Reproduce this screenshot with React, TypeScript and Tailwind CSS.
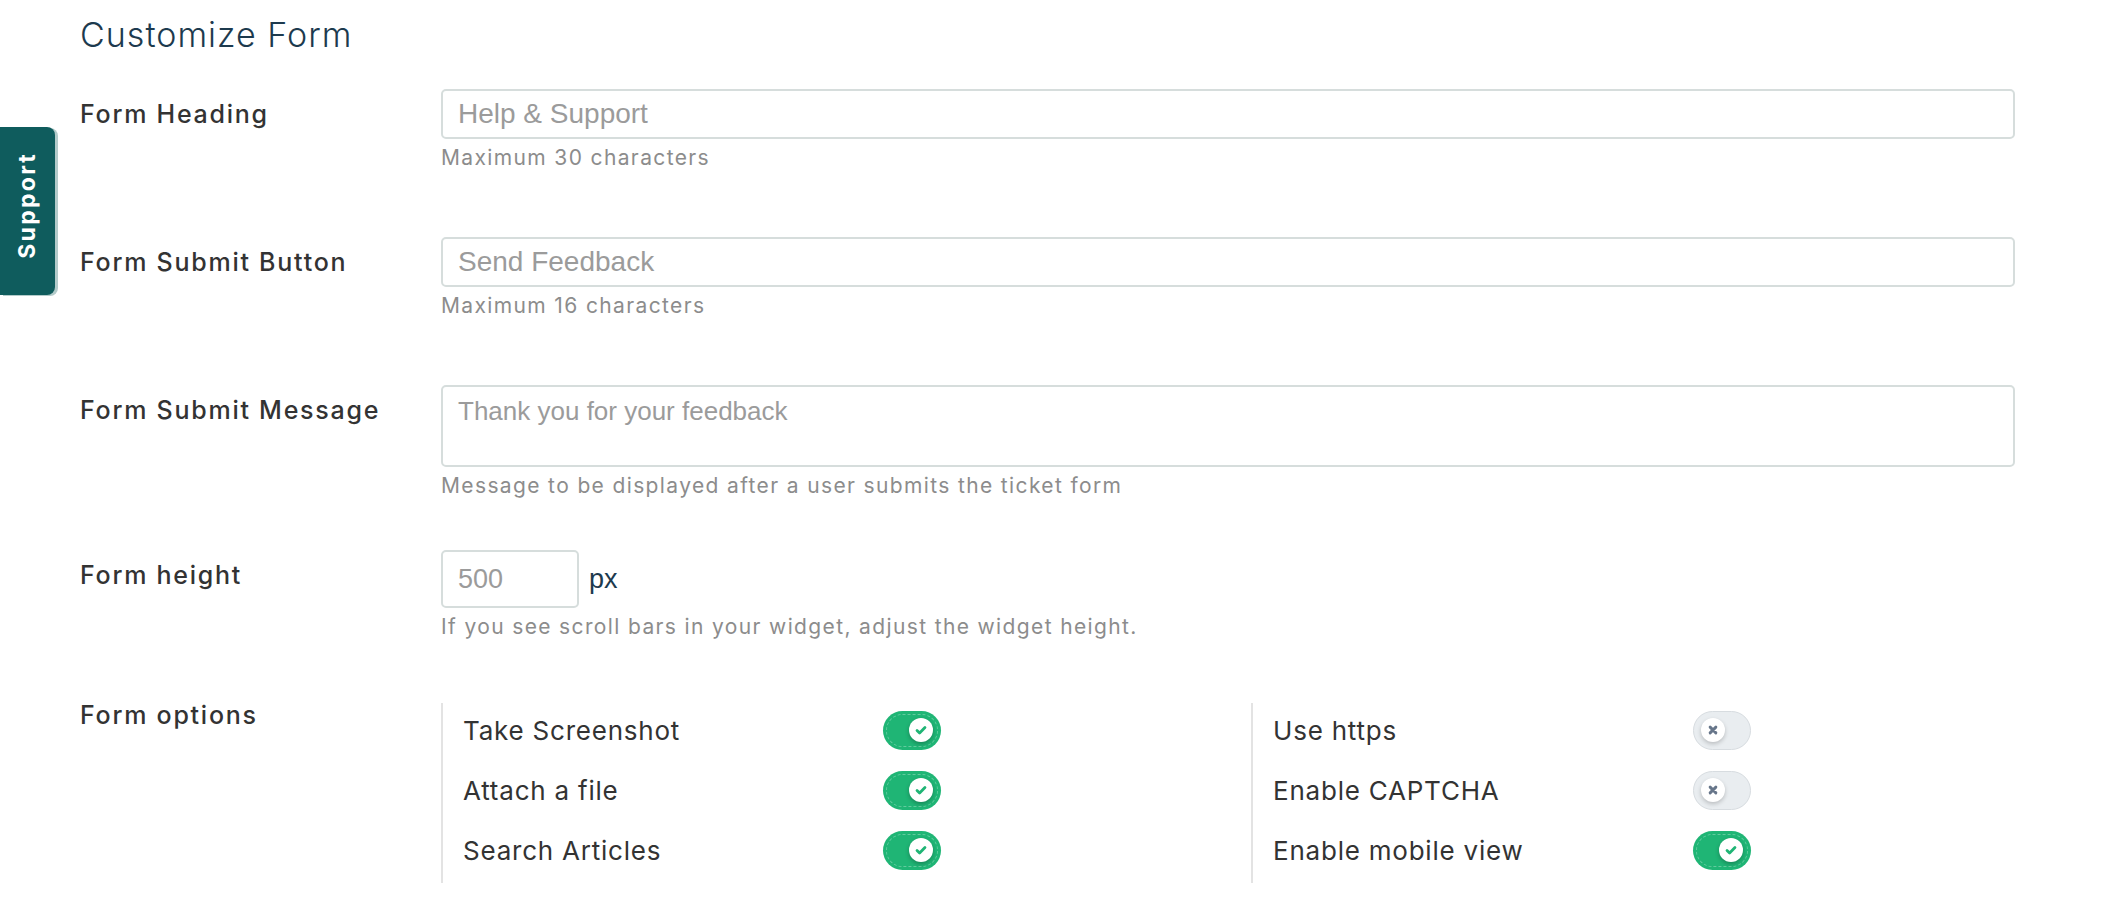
import type { ReactNode } from "react"

const leftOptions = [
  { label: "Take Screenshot", on: true },
  { label: "Attach a file", on: true },
  { label: "Search Articles", on: true },
]

const rightOptions = [
  { label: "Use https", on: false },
  { label: "Enable CAPTCHA", on: false },
  { label: "Enable mobile view", on: true },
]

const inputCls =
  "w-full rounded-[5px] border-2 border-[#d6dddc] bg-white px-[15px] font-['Liberation_Sans',Arial,sans-serif] text-[#333] outline-none placeholder:text-[#9b9b9b]"

function Toggle({ on }: { on: boolean }) {
  if (on) {
    return (
      <span className="relative flex h-[39px] w-[58px] items-center justify-end rounded-full bg-[#1fb575] pr-[8px]">
        <span className="pointer-events-none absolute inset-[3px] rounded-full border border-dashed border-white/30" />
        <span className="relative flex h-[24px] w-[24px] items-center justify-center rounded-full bg-white shadow-[0_2px_4px_rgba(0,0,0,0.25)]">
          <svg width="14" height="14" viewBox="0 0 12 12">
            <path d="M2.6 6.4l2.2 2.2 4.6-4.8" fill="none" stroke="#1fb575" strokeWidth="2.4" strokeLinecap="round" strokeLinejoin="round" />
          </svg>
        </span>
      </span>
    )
  }
  return (
    <span className="relative flex h-[39px] w-[58px] items-center justify-start rounded-full border border-[#d7dce0] bg-[#e9edf0] pl-[7px]">
      <span className="relative flex h-[24px] w-[24px] items-center justify-center rounded-full bg-white shadow-[0_2px_4px_rgba(0,0,0,0.2)]">
        <svg width="12" height="12" viewBox="0 0 10 10">
          <path d="M2.6 2.6l4.8 4.8M7.4 2.6l-4.8 4.8" fill="none" stroke="#67768a" strokeWidth="2.4" strokeLinecap="round" />
        </svg>
      </span>
    </span>
  )
}

const labelCls = "w-[361px] shrink-0 text-[25px] font-medium leading-[32px] tracking-[0.07em] text-[#333]"

function Row({ label, children, className }: { label: string; children: ReactNode; className?: string }) {
  return (
    <div className={`flex ${className ?? ""}`}>
      <div className={`${labelCls} pt-[9px]`}>{label}</div>
      <div className="min-w-0 flex-1">{children}</div>
    </div>
  )
}

function Help({ children }: { children: ReactNode }) {
  return <p className="mt-[7px] text-[21px] leading-[24px] tracking-[0.065em] text-[#8c8c8c]">{children}</p>
}

function OptionColumn({ items }: { items: { label: string; on: boolean }[] }) {
  return (
    <div className="w-[810px] border-l-2 border-[#e3e3e3]">
      {items.map((item) => (
        <div key={item.label} className="flex h-[60px] items-center pb-[6px]">
          <span className="w-[440px] pl-[20px] text-[26px] tracking-[0.03em] text-[#333]">{item.label}</span>
          <Toggle on={item.on} />
        </div>
      ))}
    </div>
  )
}

export default function App() {
  return (
    <div className="relative min-h-[902px] bg-white font-['Inter',sans-serif]">
      {/* floating support tab */}
      <div className="absolute left-0 top-[127px] flex h-[168px] w-[55px] items-start justify-center rounded-r-[8px] bg-[#0f5c5d] pt-[25px] shadow-[3px_1px_0_#b3cbca]">
        <span className="rotate-180 text-[23px] font-bold leading-none tracking-[0.1em] text-white [writing-mode:vertical-rl]">
          Support
        </span>
      </div>

      <div className="pl-[80px] pr-[93px]">
        <h1 className="pt-[15px] text-[34px] font-light leading-[40px] tracking-[0.03em] text-[#1d3a4e]">Customize Form</h1>

        <div className="mt-[34px]">
          <Row label="Form Heading" className="mb-[67px]">
            <input readOnly className={`${inputCls} h-[50px] text-[28px]`} placeholder="Help & Support" />
            <Help>Maximum 30 characters</Help>
          </Row>

          <Row label="Form Submit Button" className="mb-[67px]">
            <input readOnly className={`${inputCls} h-[50px] text-[28px]`} placeholder="Send Feedback" />
            <Help>Maximum 16 characters</Help>
          </Row>

          <Row label="Form Submit Message" className="mb-[52px]">
            <textarea
              readOnly
              className={`${inputCls} block h-[82px] resize-none pt-[8px] text-[26px] leading-[32px]`}
              placeholder="Thank you for your feedback"
            />
            <Help>Message to be displayed after a user submits the ticket form</Help>
          </Row>

          <Row label="Form height" className="mb-[64px]">
            <div className="flex items-center">
              <input readOnly className={`${inputCls} h-[58px] !w-[138px] text-[27px]`} placeholder="500" />
              <span className="ml-[10px] font-['Liberation_Sans',Arial,sans-serif] text-[27px] text-[#1d3a4e]">px</span>
            </div>
            <Help>If you see scroll bars in your widget, adjust the widget height.</Help>
          </Row>

          <div className="flex">
            <div className={`${labelCls} -mt-[4px]`}>Form options</div>
            <div className="flex">
              <OptionColumn items={leftOptions} />
              <OptionColumn items={rightOptions} />
            </div>
          </div>
        </div>
      </div>
    </div>
  )
}
